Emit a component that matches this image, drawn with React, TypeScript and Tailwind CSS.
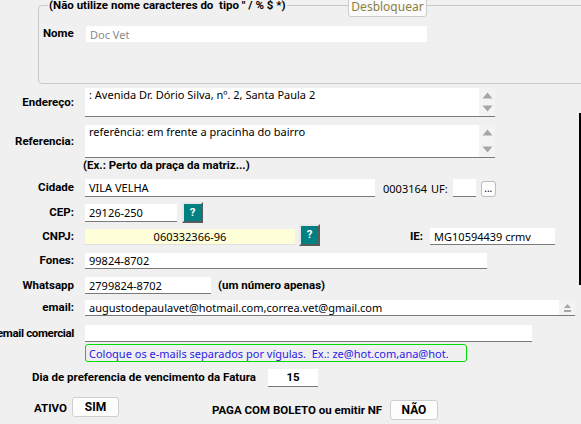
import React from 'react'

const bold = "font-bold font-['Roboto',sans-serif] text-[11.5px]"

const Label = ({ children, w = 'w-[75px]' }: { children: React.ReactNode; w?: string }) => (
  <div className={`${w} shrink-0 text-right ${bold} whitespace-nowrap pr-[1px]`}>{children}</div>
)

const Field = ({ value, w, h = 'h-[16px]', extra = '' }: { value?: string; w: string; h?: string; extra?: string }) => (
  <div className={`${w} ${h} shrink-0 bg-white border-b border-[#7a7a7a] flex items-center pl-[4px] whitespace-nowrap overflow-hidden ${extra}`}>
    {value}
  </div>
)

const Arrows = () => (
  <div className="w-[16px] shrink-0 bg-[#f3f3f3] flex flex-col items-center justify-between py-[4px]">
    <svg width="11" height="7" viewBox="0 0 11 7"><path d="M5.5 0.5 L10.5 6.5 L0.5 6.5 Z" fill="#a6a6a6" /></svg>
    <svg width="11" height="7" viewBox="0 0 11 7"><path d="M0.5 0.5 L10.5 0.5 L5.5 6.5 Z" fill="#a6a6a6" /></svg>
  </div>
)

const Memo = ({ value, h }: { value: string; h: string }) => (
  <div className={`w-[410px] ${h} shrink-0 bg-white border-b border-[#7a7a7a] flex`}>
    <div className="flex-1 pl-[4px] pt-[1px] whitespace-nowrap overflow-hidden">{value}</div>
    <Arrows />
  </div>
)

const Help = ({ extra = '' }: { extra?: string }) => (
  <div
    className={`w-[21px] h-[21px] shrink-0 bg-[#008080] border-2 border-t-[#e8e8e8] border-l-[#e8e8e8] border-b-[#5a5a5a] border-r-[#5a5a5a] flex items-center justify-center text-white ${bold} ${extra}`}
  >
    ?
  </div>
)

const Btn = ({ children, extra = '' }: { children: React.ReactNode; extra?: string }) => (
  <div
    className={`h-[20px] shrink-0 bg-[#fdfdfd] border border-[#cfcfcf] rounded-[3px] flex items-center justify-center font-bold font-['Roboto',sans-serif] text-[12px] ${extra}`}
  >
    {children}
  </div>
)

export default function App() {
  return (
    <div className="relative w-[581px] h-[424px] overflow-hidden bg-[#f0f0f0] text-[11px] leading-none text-black font-['Noto_Sans',sans-serif]">
      {/* Grupo do nome */}
      <div className="relative ml-[38px] mt-[5px] w-[570px] h-[79px] border border-[#c8c8c8] rounded-[4px] pt-[20px] pl-[4px]">
        <div className={`absolute -top-[6px] left-[9px] bg-[#f0f0f0] px-[1px] ${bold} whitespace-nowrap`}>
          (Não utilize nome caracteres do&nbsp; tipo " / % $ *)
        </div>
        <div className="absolute -top-[8px] left-[309px] w-[79px] h-[19px] bg-[#fbfbfb] border border-[#cdcdcd] rounded-[3px] flex items-end justify-center pb-[3px] text-[12px] text-[#8c7f3e]">
          Desbloquear
        </div>
        <div className="flex items-center">
          <div className={`w-[43px] shrink-0 ${bold}`}>Nome</div>
          <div className="w-[341px] h-[16px] bg-white flex items-center pl-[4px] text-[#8a8a8a]">Doc Vet</div>
        </div>
      </div>

      {/* Endereço */}
      <div className="flex items-center gap-[10px] mt-[4px]">
        <Label>Endereço:</Label>
        <Memo value=": Avenida Dr. Dório Silva, nº. 2, Santa Paula 2" h="h-[29px]" />
      </div>

      {/* Referencia */}
      <div className="flex items-center gap-[10px] mt-[8px]">
        <Label>Referencia:</Label>
        <Memo value="referência: em frente a pracinha do bairro" h="h-[33px]" />
      </div>

      <div className={`h-[16px] flex items-center pl-[83px] ${bold}`}>(Ex.: Perto da praça da matriz...)</div>

      {/* Cidade */}
      <div className="flex items-center mt-[5px] h-[18px]">
        <Label>Cidade</Label>
        <Field value="VILA VELHA" w="w-[290px]" h="h-[18px]" extra="ml-[10px]" />
        <div className="ml-[8px]">0003164</div>
        <div className="ml-[4px]">UF:</div>
        <Field w="w-[23px]" h="h-[18px]" extra="ml-[5px]" />
        <div className="ml-[5px] w-[15px] h-[16px] mt-[2px] bg-[#fdfdfd] border border-[#bdbdbd] rounded-[3px] flex items-end justify-center pb-[3px] text-[10px]">...</div>
      </div>

      {/* CEP */}
      <div className="flex items-center gap-[10px] mt-[5px] h-[21px]">
        <Label>CEP:</Label>
        <Field value="29126-250" w="w-[92px]" h="h-[18px]" />
        <Help extra="ml-[-5px]" />
      </div>

      {/* CNPJ / IE */}
      <div className="flex items-start gap-[10px] mt-[1px] h-[22px]">
        <Label w="w-[75px] mt-[7px]">CNPJ:</Label>
        <div className="w-[210px] h-[16px] mt-[5px] shrink-0 bg-[#fefed8] border-b border-[#e0e0e0] flex items-center justify-center">060332366-96</div>
        <Help extra="ml-[-6px] h-[22px]" />
        <div className={`ml-[80px] mt-[7px] ${bold}`}>IE:</div>
        <Field value="MG10594439 crmv" w="w-[125px]" h="h-[17px]" extra="ml-[-3px] mt-[4px]" />
      </div>

      {/* Fones */}
      <div className="flex items-center gap-[10px] mt-[7px]">
        <Label>Fones:</Label>
        <Field value="99824-8702" w="w-[402px]" />
      </div>

      {/* Whatsapp */}
      <div className="flex items-center gap-[10px] mt-[8px]">
        <Label>Whatsapp</Label>
        <Field value="2799824-8702" w="w-[126px]" h="h-[17px]" />
        <div className={`ml-[-3px] ${bold}`}>(um número apenas)</div>
      </div>

      {/* email */}
      <div className="flex items-center gap-[10px] mt-[6px]">
        <Label>email:</Label>
        <div className="w-[490px] h-[16px] shrink-0 bg-white border-b border-[#7a7a7a] flex">
          <div className="flex-1 pl-[4px] flex items-center whitespace-nowrap">augustodepaulavet@hotmail.com,correa.vet@gmail.com</div>
          <div className="w-[16px] bg-[#f3f3f3] flex flex-col items-center justify-center gap-[2px]">
            <svg width="7" height="4" viewBox="0 0 7 4"><path d="M3.5 0 L7 4 L0 4 Z" fill="#a6a6a6" /></svg>
            <div className="w-[7px] h-[2px] bg-[#a6a6a6]" />
          </div>
        </div>
      </div>

      {/* email comercial */}
      <div className="flex items-center gap-[10px] mt-[9px]">
        <div className="w-[75px] shrink-0 flex justify-end overflow-hidden">
          <div className={`${bold} tracking-[-0.35px] whitespace-nowrap pr-[1px]`}>email comercial</div>
        </div>
        <Field w="w-[447px]" h="h-[17px]" />
      </div>

      <div className="ml-[85px] mt-[2px] w-[382px] h-[18px] border border-[#00dd00] rounded-[3px] flex items-center pl-[3px] text-[#2a1be6] whitespace-nowrap">
        Coloque os e-mails separados por vígulas.&nbsp; Ex.: ze@hot.com,ana@hot.
      </div>

      {/* Dia de vencimento */}
      <div className="flex items-center mt-[7px] h-[18px]">
        <div className={`ml-[32px] w-[236px] ${bold} whitespace-nowrap`}>Dia de preferencia de vencimento da Fatura</div>
        <div className={`w-[50px] h-[18px] bg-white border-b border-[#7a7a7a] flex items-center justify-center ${bold}`}>15</div>
      </div>

      {/* Ativo / Boleto */}
      <div className="flex items-start mt-[10px] h-[23px]">
        <div className={`ml-[34px] w-[38px] mt-[6px] ${bold}`}>ATIVO</div>
        <Btn extra="w-[47px]">SIM</Btn>
        <div className={`ml-[93px] w-[178px] mt-[8px] ${bold} whitespace-nowrap`}>PAGA COM BOLETO ou emitir NF</div>
        <Btn extra="w-[48px] mt-[3px]">NÃO</Btn>
      </div>

      <div className="absolute left-[579px] top-[113px] w-[2px] h-[172px] bg-black" />
    </div>
  )
}
